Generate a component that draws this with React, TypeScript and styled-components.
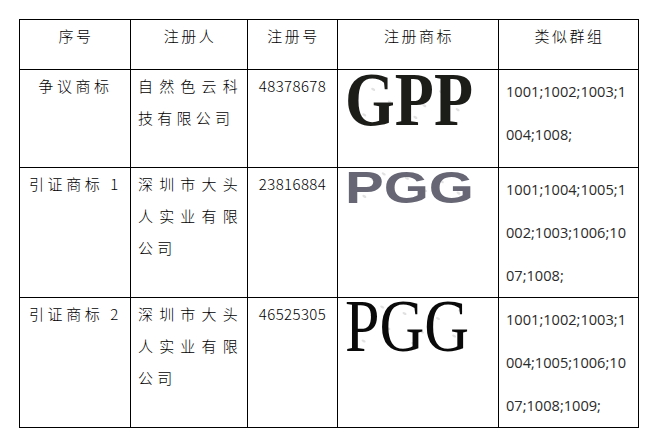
import React from "react";
import styled, { createGlobalStyle } from "styled-components";

const Global = createGlobalStyle`
  html, body { margin: 0; padding: 0; background: #fff; }
  body { font-family: "Noto Sans CJK SC", "Noto Sans", sans-serif; }
`;

const Page = styled.div`
  padding: 19px 0 0 19px;
`;

const Grid = styled.div`
  display: grid;
  grid-template-columns: 110px 116px 89px 160px 139px;
  grid-template-rows: 49px 97px 129px 129px;
  gap: 1px;
  width: 618px;
  background: #000;
  border: 1px solid #000;
`;

const Cell = styled.div<{ $align?: "left" | "center" }>`
  background: #fff;
  overflow: hidden;
  text-align: ${(p) => p.$align ?? "center"};
`;

const Head = styled(Cell)`
  font-family: "Noto Sans CJK SC", sans-serif;
  font-weight: 300;
  font-size: 15px;
  line-height: 32px;
  letter-spacing: 2.5px;
  color: #000;
  padding-left: 2px;
`;

const Label = styled(Cell)`
  font-family: "Noto Sans CJK SC", sans-serif;
  font-weight: 300;
  font-size: 15px;
  line-height: 32px;
  letter-spacing: 3.6px;
  color: #000;
  padding-left: 1px;
`;

const Owner = styled(Cell)`
  font-family: "Noto Sans CJK SC", sans-serif;
  font-weight: 300;
  font-size: 15px;
  line-height: 32px;
  letter-spacing: 4.25px;
  color: #000;
  text-align: justify;
  padding: 0 5px 0 7px;
`;

const RegNo = styled(Cell)`
  font-family: "Noto Sans CJK SC", sans-serif;
  font-weight: 300;
  font-size: 15px;
  line-height: 32px;
  letter-spacing: 0.4px;
  color: #000;
`;

const MarkCell = styled(Cell)<{ $top: number }>`
  overflow: visible;
  padding: ${(p) => p.$top}px 0 0 7px;
  text-align: left;
`;

const Groups = styled(Cell)`
  font-family: "Open Sans", "Noto Sans", sans-serif;
  font-size: 14.6px;
  line-height: 43px;
  color: #2a2a2a;
  text-align: left;
  word-break: break-all;
  padding: 0 6px 0 7px;
`;

const MarkSvg = styled.svg`
  display: block;
  overflow: visible;
`;

type Mark = {
  text: string;
  width: number;
  height: number;
  font: string;
  weight: number;
  size: number;
  baseline: number;
  fill: string;
  top: number;
};

const Smudges: React.FC<{ w: number; h: number }> = ({ w, h }) => {
  const pts = [
    [0.22, 0.3], [0.35, 0.55], [0.48, 0.25], [0.62, 0.62], [0.75, 0.35],
    [0.88, 0.7], [0.15, 0.8], [0.55, 0.85], [0.93, 0.2], [0.3, 0.12],
  ];
  return (
    <g fill="#c9c9c9" opacity="0.55">
      {pts.map(([x, y], i) => (
        <ellipse key={i} cx={x * w} cy={y * h} rx={2.2} ry={1.2} transform={`rotate(30 ${x * w} ${y * h})`} />
      ))}
    </g>
  );
};

const Logo: React.FC<{ m: Mark }> = ({ m }) => (
  <MarkSvg width={m.width + 4} height={m.height} viewBox={`0 0 ${m.width + 4} ${m.height}`}>
    <Smudges w={m.width} h={m.baseline} />
    <text
      x={0}
      y={m.baseline}
      fontFamily={m.font}
      fontWeight={m.weight}
      fontSize={m.size}
      fill={m.fill}
      textLength={m.width}
      lengthAdjust="spacingAndGlyphs"
    >
      {m.text}
    </text>
  </MarkSvg>
);

const rows: {
  label: string;
  owner: string;
  no: string;
  mark: Mark;
  groups: string;
}[] = [
  {
    label: "争议商标",
    owner: "自然色云科技有限公司",
    no: "48378678",
    mark: {
      text: "GPP",
      width: 128,
      height: 76,
      font: "'Liberation Serif', serif",
      weight: 700,
      size: 76,
      baseline: 51,
      fill: "#1c1c19",
      top: 4,
    },
    groups: "1001;1002;1003;1004;1008;",
  },
  {
    label: "引证商标 1",
    owner: "深圳市大头人实业有限公司",
    no: "23816884",
    mark: {
      text: "PGG",
      width: 129,
      height: 48,
      font: "'Liberation Sans', sans-serif",
      weight: 700,
      size: 44,
      baseline: 33,
      fill: "#666674",
      top: 2,
    },
    groups: "1001;1004;1005;1002;1003;1006;1007;1008;",
  },
  {
    label: "引证商标 2",
    owner: "深圳市大头人实业有限公司",
    no: "46525305",
    mark: {
      text: "PGG",
      width: 124,
      height: 74,
      font: "'Liberation Serif', serif",
      weight: 400,
      size: 74,
      baseline: 50,
      fill: "#0a0a0a",
      top: 3,
    },
    groups: "1001;1002;1003;1004;1005;1006;1007;1008;1009;",
  },
];

export default function App() {
  return (
    <Page>
      <Global />
      <Grid>
        <Head>序号</Head>
        <Head>注册人</Head>
        <Head>注册号</Head>
        <Head>注册商标</Head>
        <Head>类似群组</Head>
        {rows.map((r, i) => (
          <React.Fragment key={i}>
            <Label>{r.label}</Label>
            <Owner>{r.owner}</Owner>
            <RegNo>{r.no}</RegNo>
            <MarkCell $top={r.mark.top}>
              <Logo m={r.mark} />
            </MarkCell>
            <Groups>{r.groups}</Groups>
          </React.Fragment>
        ))}
      </Grid>
    </Page>
  );
}
